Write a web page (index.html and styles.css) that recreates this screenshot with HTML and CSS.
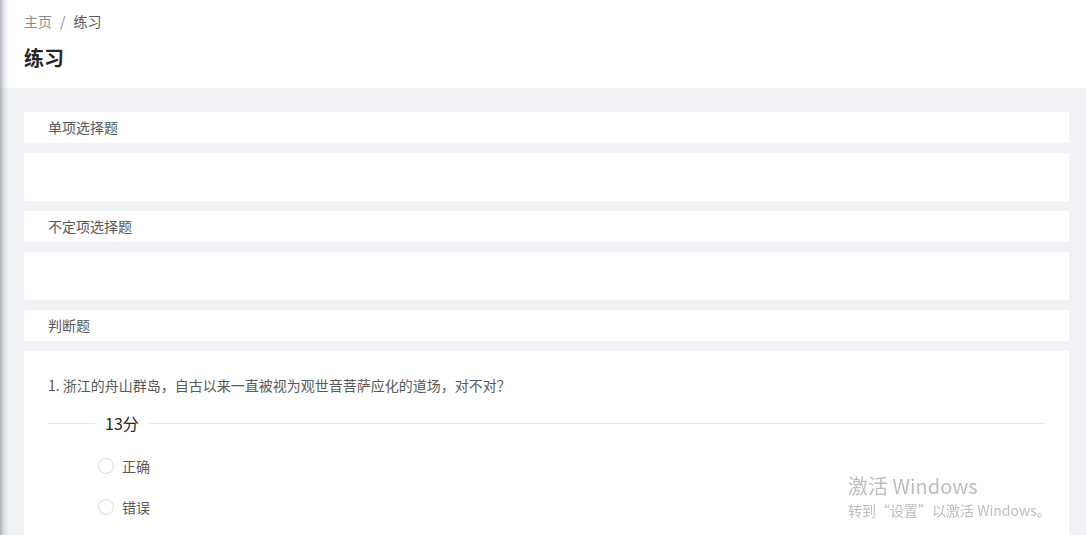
FILE: index.html
```html
<!DOCTYPE html>
<html lang="zh-CN">
<head>
<meta charset="utf-8">
<title>练习</title>
<link rel="stylesheet" href="styles.css">
</head>
<body>
<div class="edge-shadow"></div>
<header class="page-header">
  <nav class="breadcrumb">
    <span class="crumb-link">主页</span>
    <span class="crumb-sep">/</span>
    <span class="crumb-current">练习</span>
  </nav>
  <h1 class="page-title">练习</h1>
</header>
<main class="content">
  <div class="section-head">单项选择题</div>
  <div class="section-body empty"></div>
  <div class="section-head">不定项选择题</div>
  <div class="section-body empty"></div>
  <div class="section-head">判断题</div>
  <div class="section-body">
    <p class="question">1. 浙江的舟山群岛，自古以来一直被视为观世音菩萨应化的道场，对不对？</p>
    <div class="divider">
      <span class="divider-line short"></span>
      <span class="divider-text">13分</span>
      <span class="divider-line long"></span>
    </div>
    <div class="radio-group">
      <label class="radio"><span class="radio-circle"></span><span class="radio-label">正确</span></label>
      <label class="radio"><span class="radio-circle"></span><span class="radio-label">错误</span></label>
    </div>
  </div>
</main>
<div class="watermark">
  <div class="wm-title">激活 Windows</div>
  <div class="wm-sub">转到“设置”以激活 Windows。</div>
</div>
</body>
</html>
```
FILE: styles.css
```css
html, body {
  margin: 0;
  padding: 0;
}
body {
  font-family: "Noto Sans CJK SC", "Noto Sans", sans-serif;
  font-size: 14px;
  color: #595959;
  background: #f0f2f5;
  min-height: 535px;
  overflow: hidden;
}
.edge-shadow {
  position: fixed;
  left: 0;
  top: 0;
  bottom: 0;
  width: 9px;
  background: linear-gradient(to right, rgba(120,128,140,0.55), rgba(170,176,186,0.25) 50%, rgba(255,255,255,0));
  z-index: 5;
}
.page-header {
  background: #fff;
  padding: 10px 24px 16px 24px;
}
.breadcrumb {
  display: flex;
  align-items: center;
  line-height: 22px;
  font-size: 14px;
}
.crumb-link {
  color: #8c8c8c;
}
.crumb-sep {
  color: #8c8c8c;
  margin: 0 8px;
}
.crumb-current {
  color: #595959;
}
.page-title {
  margin: 12px 0 0 0;
  font-size: 20px;
  line-height: 28px;
  font-weight: 700;
  color: #262626;
}
.content {
  display: flex;
  flex-direction: column;
  gap: 10px;
  padding: 24px 17px 0 24px;
}
.section-head {
  background: #fff;
  height: 31px;
  display: flex;
  align-items: center;
  padding: 0 24px 1px 24px;
  box-sizing: border-box;
  font-size: 14px;
  color: #595959;
}
.section-body {
  background: #fff;
  padding: 23px 24px 20px 24px;
}
.section-body.empty {
  height: 48px;
  padding: 0;
}
.question {
  margin: 0;
  line-height: 22px;
  font-size: 14px;
  color: #595959;
}
.divider {
  display: flex;
  align-items: center;
  margin-top: 16px;
  height: 22px;
}
.divider-line {
  height: 1px;
  background: #e8e8e8;
}
.divider-line.short {
  width: 47px;
}
.divider-line.long {
  flex: 1;
}
.divider-text {
  padding: 0 10px;
  font-size: 16px;
  color: #262626;
  line-height: 22px;
}
.radio-group {
  display: flex;
  flex-direction: column;
  gap: 19px;
  margin-top: 21px;
  padding-left: 50px;
}
.radio {
  display: flex;
  align-items: center;
  line-height: 22px;
  font-size: 14px;
  color: #595959;
}
.radio-circle {
  width: 14px;
  height: 14px;
  border: 1px solid #d9d9d9;
  border-radius: 50%;
  background: #fff;
  margin-right: 8px;
}
.watermark {
  position: fixed;
  left: 848px;
  top: 472px;
  color: #bdbdbd;
  font-family: "Noto Sans CJK SC", "Noto Sans", sans-serif;
  pointer-events: none;
}
.wm-title {
  font-size: 20px;
  line-height: 28px;
}
.wm-sub {
  font-size: 14px;
  line-height: 20px;
}
```
